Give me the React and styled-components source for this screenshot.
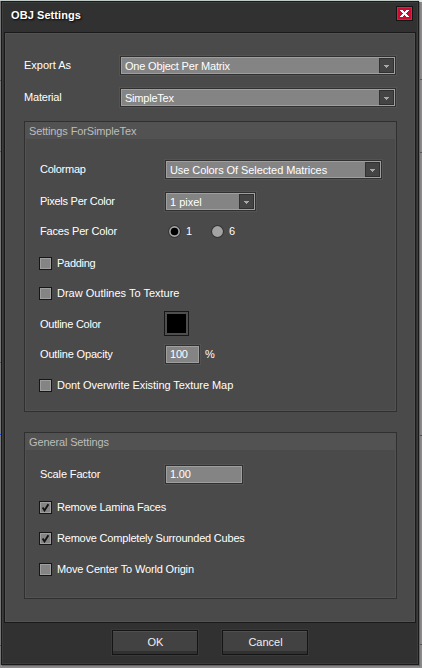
import React from "react";
import styled, { createGlobalStyle } from "styled-components";

const GlobalStyle = createGlobalStyle`
  *, *::before, *::after { box-sizing: border-box; }
  body { margin: 0; overflow: hidden; }
`;

const Viewport = styled.div`
  position: relative;
  width: 422px;
  height: 668px;
  padding: 1px 3px 3px 1px;
  background: #8d8b8c;
  font: 11px/13px "Liberation Sans", Arial, sans-serif;
  color: #fff;
`;

const Backdrop = styled.svg`
  position: absolute;
  inset: 0;
`;

const Dialog = styled.div`
  position: relative;
  width: 418px;
  height: 664px;
  display: flex;
  flex-direction: column;
  padding: 0 2px;
  border: 1px solid #1a1a1a;
  background: #313131;
  box-shadow: inset 0 0 0 1px #3b3c3c, 1px 1px 1px #666;
`;

const TitleBar = styled.header`
  height: 30px;
  flex: none;
  display: flex;
  justify-content: space-between;
  align-items: flex-start;
  padding: 4px 3px 0 7px;
`;

const Title = styled.h1`
  margin: 3px 0 0;
  font-size: 11px;
  line-height: 13px;
  font-weight: bold;
  letter-spacing: 0.08px;
  color: #fff;
  text-shadow: 1px 1px 2px #000;
`;

const CloseButton = styled.button`
  width: 17px;
  height: 15px;
  padding: 0;
  display: flex;
  align-items: center;
  justify-content: center;
  border: 1px solid #151515;
  background: #cc0b30;
  box-shadow: inset 0 0 0 1px #df2145;
`;

const Content = styled.main`
  height: 591px;
  flex: none;
  padding: 23px 18px 0 19px;
  border: 1px solid #1a1a1a;
  background: #4a4a4a;
  box-shadow: inset 0 0 0 1px #525252;
`;

const Row = styled.div`
  display: flex;
  align-items: center;
  height: ${(p) => p.$h || 19}px;
  margin-top: ${(p) => p.$gap || 0}px;
`;

const Label = styled.span`
  width: ${(p) => p.$w}px;
  flex: none;
  padding-top: ${(p) => p.$pt || 0}px;
  white-space: nowrap;
  letter-spacing: ${(p) => p.$ls || 0}px;
`;

const SelectBox = styled.div`
  width: ${(p) => p.$w}px;
  height: 19px;
  flex: none;
  display: flex;
  justify-content: space-between;
  padding: 1px 1px 1px 4px;
  border: 1px solid #303030;
  background: #848484;
  box-shadow: inset 0 0 0 1px #9f9f9f, 0 0 0 1px #535353;
`;

const SelectText = styled.span`
  line-height: 17px;
  white-space: nowrap;
  letter-spacing: ${(p) => p.$ls || 0}px;
`;

const Arrow = styled.span`
  width: 15px;
  height: 15px;
  display: flex;
  align-items: center;
  justify-content: center;
  padding-top: 2px;
  border: 1px solid #303030;
  background: #444;
`;

const Field = styled.input`
  width: ${(p) => p.$w}px;
  height: 19px;
  flex: none;
  padding: 0 4px 2px;
  border: 1px solid #303030;
  outline: 0;
  background: #848484;
  color: #fff;
  font: inherit;
  letter-spacing: -0.2px;
  box-shadow: inset 0 0 0 1px #9f9f9f, 0 0 0 1px #535353;
`;

const Unit = styled.span`
  margin-left: 5px;
`;

const Group = styled.section`
  height: ${(p) => p.$h}px;
  margin-top: ${(p) => p.$gap}px;
  padding: 0 1px 0 15px;
  border: 1px solid #303030;
  box-shadow: inset 0 0 0 1px #525252;
`;

const GroupTitle = styled.h2`
  height: 17px;
  margin: 0 0 0 -15px;
  padding-left: 4px;
  font-size: 11px;
  line-height: 19px;
  font-weight: normal;
  letter-spacing: -0.13px;
  color: #bdbdbd;
  background: #525252;
`;

const CheckLabel = styled.label`
  height: 13px;
  margin: ${(p) => p.$gap}px 0 0 -1px;
  display: flex;
  align-items: center;
  gap: 5px;
  white-space: nowrap;
  letter-spacing: ${(p) => p.$ls || 0}px;
`;

const CheckSquare = styled.span`
  width: 13px;
  height: 13px;
  flex: none;
  display: flex;
  align-items: center;
  justify-content: center;
  border: 1px solid #161616;
  background: #848484;
  box-shadow: inset 0 0 0 1px #9f9f9f;
`;

const RadioLabel = styled.label`
  display: flex;
  align-items: center;
  width: 43px;
  gap: 5px;
`;

const Swatch = styled.span`
  width: 25px;
  height: 25px;
  flex: none;
  margin-left: -1px;
  border: 1px solid #161616;
  background: #000;
  box-shadow: inset 0 0 0 2px #4e4e4e;
`;

const Footer = styled.footer`
  display: flex;
  gap: 24px;
  padding: 7px 0 0 108px;
`;

const PushButton = styled.button`
  width: 86px;
  height: 25px;
  padding: 0 0 1px 1px;
  border: 1px solid #151515;
  background: linear-gradient(#424242 20px, #303030 20px);
  box-shadow: inset 0 1px #4f4f4f, 0 0 0 1px #393939;
  color: #f0f0f0;
  font: 11px/13px "Liberation Sans", Arial, sans-serif;
`;

function Select({ width, value, ls }) {
  return (
    <SelectBox $w={width}>
      <SelectText $ls={ls}>{value}</SelectText>
      <Arrow>
        <svg width="5" height="3" shapeRendering="crispEdges">
          <path d="M0 0h5v1H4v1H3v1H2V2H1V1H0z" fill="#a8a8a8" />
        </svg>
      </Arrow>
    </SelectBox>
  );
}

function Check({ gap, checked, ls, children }) {
  return (
    <CheckLabel $gap={gap} $ls={ls}>
      <CheckSquare>
        {checked && (
          <svg width="9" height="9" viewBox="0 0 9 9">
            <path d="M1.6 4.4L3.5 7.4L7.4 1.3" fill="none" stroke="#111" strokeWidth="1.9" />
          </svg>
        )}
      </CheckSquare>
      {children}
    </CheckLabel>
  );
}

function Radio({ on, children }) {
  return (
    <RadioLabel>
      <svg width="13" height="13" viewBox="0 0 13 13">
        <circle cx="6.5" cy="6.5" r="6.4" fill="#333" />
        <circle cx="6.5" cy="6.5" r="5.4" fill="#a3a3a3" />
        {on && <circle cx="6.5" cy="6.5" r="3.8" fill="#000" />}
      </svg>
      {children}
    </RadioLabel>
  );
}

export default function App() {
  return (
    <Viewport>
      <GlobalStyle />
      <Backdrop width="422" height="668" shapeRendering="crispEdges">
        <path d="M0 0h422v1H0z" fill="#c2cac7" />
        <path d="M419 0h3v2h-3z" fill="#e4eae7" />
        <path d="M0 1h1v664H0z" fill="#777" />
        <path d="M0 80h1v1H0zM0 151h1v1H0zM0 362h1v1H0zM0 645h1v1H0zM419 78h1v1h2v1h-3zM419 152h3v1h-3zM419 643h1v1h2v1h-3z" fill="#555" />
        <path d="M0 434h1v1H0z" fill="#1648c8" />
        <path d="M420 435h2v1h-2zM419 436h1v1h-1z" fill="#d01038" />
      </Backdrop>
      <Dialog>
        <TitleBar>
          <Title>OBJ Settings</Title>
          <CloseButton aria-label="Close">
            <svg width="9" height="7" viewBox="0 0 9 7" shapeRendering="crispEdges">
              <path d="M0 0h3v1h1v1h1V1h1V0h3v1H8v1H7v1H6v1h1v1h1v1h1v1H6V6H5V5H4v1H3v1H0V6h1V5h1V4h1V3H2V2H1V1H0z" fill="#fff" />
            </svg>
          </CloseButton>
        </TitleBar>
        <Content>
          <Row>
            <Label $w={96}>Export As</Label>
            <Select width={276} ls={-0.19} value="One Object Per Matrix" />
          </Row>
          <Row $gap={13}>
            <Label $w={96} $ls={-0.2}>Material</Label>
            <Select width={276} ls={-0.22} value="SimpleTex" />
          </Row>
          <Group $h={291} $gap={14}>
            <GroupTitle>Settings ForSimpleTex</GroupTitle>
            <Row $gap={21}>
              <Label $w={125} $ls={-0.25}>Colormap</Label>
              <Select width={217} ls={-0.08} value="Use Colors Of Selected Matrices" />
            </Row>
            <Row $gap={13}>
              <Label $w={125} $ls={-0.26}>Pixels Per Color</Label>
              <Select width={91} ls={0} value="1 pixel" />
            </Row>
            <Row $gap={14} $h={13}>
              <Label $w={128} $ls={-0.17}>Faces Per Color</Label>
              <Radio on>1</Radio>
              <Radio>6</Radio>
            </Row>
            <Check gap={19} ls={-0.28}>Padding</Check>
            <Check gap={17} ls={0}>Draw Outlines To Texture</Check>
            <Row $gap={11} $h={25}>
              <Label $w={125} $ls={-0.25} $pt={2}>Outline Color</Label>
              <Swatch />
            </Row>
            <Row $gap={9}>
              <Label $w={125} $ls={-0.17}>Outline Opacity</Label>
              <Field $w={35} defaultValue="100" />
              <Unit>%</Unit>
            </Row>
            <Check gap={15} ls={-0.06}>Dont Overwrite Existing Texture Map</Check>
          </Group>
          <Group $h={167} $gap={20}>
            <GroupTitle>General Settings</GroupTitle>
            <Row $gap={15}>
              <Label $w={125} $ls={-0.13}>Scale Factor</Label>
              <Field $w={78} defaultValue="1.00" />
            </Row>
            <Check gap={17} ls={-0.22} checked>Remove Lamina Faces</Check>
            <Check gap={18} ls={-0.2} checked>Remove Completely Surrounded Cubes</Check>
            <Check gap={18} ls={-0.17}>Move Center To World Origin</Check>
          </Group>
        </Content>
        <Footer>
          <PushButton>OK</PushButton>
          <PushButton>Cancel</PushButton>
        </Footer>
      </Dialog>
    </Viewport>
  );
}
